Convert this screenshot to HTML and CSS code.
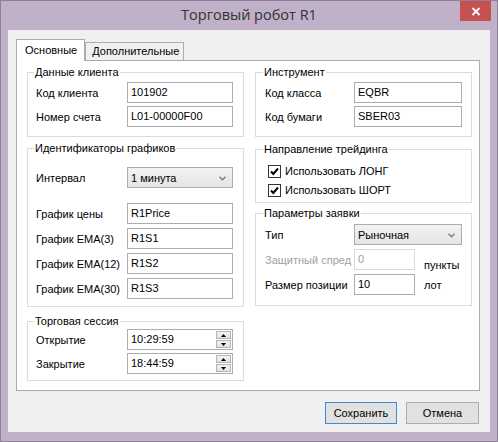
FILE: index.html
```html
<!DOCTYPE html>
<html lang="ru">
<head>
<meta charset="utf-8">
<title>Торговый робот R1</title>
<link rel="stylesheet" href="styles.css">
</head>
<body>
<div class="window">
  <div class="titlebar">
    <span class="title">Торговый робот R1</span>
    <div class="close">
      <svg width="10" height="9" viewBox="0 0 10 9"><path d="M1.5 1 L8.5 8 M8.5 1 L1.5 8" stroke="#fff" stroke-width="1.8" fill="none"/></svg>
    </div>
  </div>
  <div class="client">
    <div class="tabs">
      <div class="tab active">Основные</div>
      <div class="tab">Дополнительные</div>
    </div>
    <div class="panel">
      <div class="col">
        <fieldset class="group g-client">
          <legend>Данные клиента</legend>
          <div class="row"><span class="lbl">Код клиента</span><span class="input">101902</span></div>
          <div class="row"><span class="lbl">Номер счета</span><span class="input">L01-00000F00</span></div>
        </fieldset>
        <fieldset class="group g-charts">
          <legend>Идентификаторы графиков</legend>
          <div class="row interval"><span class="lbl">Интервал</span><span class="select">1 минута<svg class="chev" width="7" height="5" viewBox="0 0 7 5"><path d="M0.5 0.8 L3.5 3.8 L6.5 0.8" stroke="#777" stroke-width="1.3" fill="none"/></svg></span></div>
          <div class="row r25"><span class="lbl">График цены</span><span class="input">R1Price</span></div>
          <div class="row r25"><span class="lbl">График EMA(3)</span><span class="input">R1S1</span></div>
          <div class="row r25"><span class="lbl">График EMA(12)</span><span class="input">R1S2</span></div>
          <div class="row r25"><span class="lbl">График EMA(30)</span><span class="input">R1S3</span></div>
        </fieldset>
        <fieldset class="group g-session">
          <legend>Торговая сессия</legend>
          <div class="row"><span class="lbl">Открытие</span><span class="input spin">10:29:59<span class="spinbtns"><span class="sb"><svg width="5" height="3" viewBox="0 0 5 3"><path d="M0 3 L2.5 0 L5 3 Z" fill="#000"/></svg></span><span class="sb"><svg width="5" height="3" viewBox="0 0 5 3"><path d="M0 0 L2.5 3 L5 0 Z" fill="#000"/></svg></span></span></span></div>
          <div class="row"><span class="lbl">Закрытие</span><span class="input spin">18:44:59<span class="spinbtns"><span class="sb"><svg width="5" height="3" viewBox="0 0 5 3"><path d="M0 3 L2.5 0 L5 3 Z" fill="#000"/></svg></span><span class="sb"><svg width="5" height="3" viewBox="0 0 5 3"><path d="M0 0 L2.5 3 L5 0 Z" fill="#000"/></svg></span></span></span></div>
        </fieldset>
      </div>
      <div class="col right">
        <fieldset class="group g-instr">
          <legend>Инструмент</legend>
          <div class="row"><span class="lbl">Код класса</span><span class="input">EQBR</span></div>
          <div class="row"><span class="lbl">Код бумаги</span><span class="input">SBER03</span></div>
        </fieldset>
        <fieldset class="group g-dir">
          <legend>Направление трейдинга</legend>
          <div class="check"><span class="box"><svg width="11" height="11" viewBox="0 0 11 11"><path d="M2 5.5 L4.3 8 L9 2.5" stroke="#000" stroke-width="2" fill="none"/></svg></span>Использовать ЛОНГ</div>
          <div class="check"><span class="box"><svg width="11" height="11" viewBox="0 0 11 11"><path d="M2 5.5 L4.3 8 L9 2.5" stroke="#000" stroke-width="2" fill="none"/></svg></span>Использовать ШОРТ</div>
        </fieldset>
        <fieldset class="group g-order">
          <legend>Параметры заявки</legend>
          <div class="row r25"><span class="lbl">Тип</span><span class="select">Рыночная<svg class="chev" width="7" height="5" viewBox="0 0 7 5"><path d="M0.5 0.8 L3.5 3.8 L6.5 0.8" stroke="#777" stroke-width="1.3" fill="none"/></svg></span></div>
          <div class="row r25 disabled"><span class="lbl">Защитный спред</span><span class="input short">0</span><span class="unit low">пункты</span></div>
          <div class="row r25"><span class="lbl">Размер позиции</span><span class="input short">10</span><span class="unit">лот</span></div>
        </fieldset>
      </div>
    </div>
    <div class="buttons">
      <span class="btn default">Сохранить</span>
      <span class="btn">Отмена</span>
    </div>
  </div>
</div>
</body>
</html>
```
FILE: styles.css
```css
* { box-sizing: border-box; }
html, body { margin: 0; padding: 0; }
body {
  font-family: "Liberation Sans", Arial, sans-serif;
  font-size: 11px;
  color: #000;
  background: #c0b0c8;
}
.window {
  width: 498px;
  height: 442px;
  border: 1px solid #8f8099;
  background: #c0b0c8;
  display: flex;
  flex-direction: column;
}
.titlebar {
  height: 29px;
  display: grid;
  grid-template-columns: 1fr auto 1fr;
  align-items: start;
}
.title {
  grid-column: 2;
  font-family: "Open Sans", "Noto Sans", sans-serif;
  font-size: 14.5px;
  color: #333;
  line-height: 18px;
  padding-top: 5px;
}
.close {
  grid-column: 3;
  justify-self: end;
  width: 31px;
  height: 20px;
  margin-right: 6px;
  background: #c75050;
  display: flex;
  align-items: center;
  justify-content: center;
}
.client {
  flex: 1;
  margin: 0 7px 9px 7px;
  background: #f0f0f0;
  padding: 9px 10px 0 8px;
  display: flex;
  flex-direction: column;
}
.tabs {
  display: flex;
  align-items: flex-end;
  height: 21px;
}
.tab {
  height: 18px;
  line-height: 16px;
  padding: 0 4px 0 6px;
  border: 1px solid #acacac;
  border-bottom: none;
  background: #f0f0f0;
}
.tab.active {
  height: 22px;
  line-height: 20px;
  padding: 0 7px 0 8px;
  background: #fff;
  margin-bottom: -1px;
  position: relative;
  z-index: 1;
}
.panel {
  height: 331px;
  background: #fff;
  border: 1px solid #acacac;
  padding: 5px 7px 0 10px;
  display: grid;
  grid-template-columns: 217px 217px;
  column-gap: 11px;
  align-items: start;
}
.col { display: flex; flex-direction: column; }
.group {
  margin: 0;
  min-width: 0;
  border: 1px solid #dcdcdc;
  padding: 3px 0 8px 8px;
}
.group legend {
  padding: 0 1px;
  margin-left: -2px;
  line-height: 13px;
  height: 13px;
}
.row {
  display: flex;
  align-items: center;
  height: 21px;
}
.row + .row { margin-top: 3px; }
.row.r25 + .row.r25 { margin-top: 4px; }
.lbl { width: 91px; flex: none; white-space: nowrap; }
.input {
  width: 106px;
  height: 21px;
  border: 1px solid #abadb3;
  background: #fff;
  padding: 0 3px;
  line-height: 19px;
  display: flex;
  align-items: center;
}
.select {
  width: 106px;
  height: 21px;
  border: 1px solid #acacac;
  background: linear-gradient(#f2f2f2, #e5e5e5);
  padding: 0 6px 0 3px;
  display: flex;
  align-items: center;
  justify-content: space-between;
}
.chev { margin-top: 1px; }
.g-client { height: 71px; }
.g-charts { margin-top: 5px; padding-top: 12px; height: 165px; }
.g-charts .row.interval + .row { margin-top: 15px; }
.g-session { margin-top: 8px; padding-top: 1px; height: 66px; }
.spin { justify-content: space-between; padding-right: 0; }
.spinbtns {
  display: flex;
  flex-direction: column;
  gap: 1px;
  margin-right: 1px;
}
.sb {
  width: 15px;
  height: 8px;
  background: linear-gradient(#f4f4f4, #e2e2e2);
  border: 1px solid #b5b5b5;
  display: flex;
  align-items: center;
  justify-content: center;
}
.right .lbl { width: 89px; }
.right .group { padding-left: 9px; }
.right .input, .right .select { width: 108px; }
.right .input.short { width: 61px; }
.g-instr { height: 71px; }
.g-dir { margin-top: 6px; height: 60px; padding-top: 6px; }
.check {
  display: flex;
  align-items: center;
  height: 18px;
  margin-left: 3px;
}
.check + .check { margin-top: 1px; }
.box {
  width: 13px;
  height: 13px;
  border: 1px solid #333;
  background: #fff;
  margin-right: 4px;
  display: flex;
  align-items: center;
  justify-content: center;
}
.g-order { margin-top: 4px; padding-top: 4px; height: 99px; }
.disabled .lbl { color: #a0a0a0; }
.disabled .input { border-color: #d9d9d9; color: #a0a0a0; }
.unit { margin-left: 9px; }
.unit.low { align-self: flex-end; margin-bottom: -1px; }
.buttons {
  display: flex;
  justify-content: flex-end;
  gap: 9px;
  margin-top: 11px;
  padding-right: 1px;
}
.btn {
  width: 72px;
  height: 22px;
  border: 1px solid #adadad;
  background: #e1e1e1;
  display: flex;
  align-items: center;
  justify-content: center;
}
.btn.default { border-color: #3c8dd0; width: 72px; }
.btn + .btn { width: 73px; }
```
